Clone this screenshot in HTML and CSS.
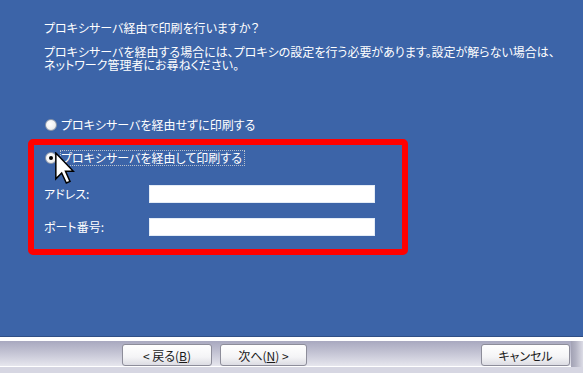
FILE: index.html
```html
<!DOCTYPE html>
<html lang="ja">
<head>
<meta charset="utf-8">
<link rel="stylesheet" href="styles.css">
</head>
<body>
<div class="page">
  <div class="main">
    <p class="title">プロキシサーバ経由で印刷を行いますか？</p>
    <div class="desc">
      <div class="line">プロキシサーバを経由する場合には、プロキシの設定を行う必要があります。設定が解らない場合は、</div>
      <div class="line">ネットワーク管理者にお尋ねください。</div>
    </div>
    <div class="option first">
      <span class="radio"></span>
      <span class="label">プロキシサーバを経由せずに印刷する</span>
    </div>
    <div class="highlight">
      <div class="option">
        <span class="radio checked"></span>
        <span class="label focus">プロキシサーバを経由して印刷する</span>
      </div>
      <div class="field">
        <span class="flabel">アドレス:</span>
        <span class="input"></span>
      </div>
      <div class="field">
        <span class="flabel">ポート番号:</span>
        <span class="input"></span>
      </div>
      <svg class="cursor" width="20" height="32" viewBox="0 0 12 19">
        <path d="M0.5,0.5 L0.5,16 L4,12.5 L6.8,18.5 L9,17.5 L6.3,11.5 L11,11.5 Z" fill="#fff" stroke="#000" stroke-width="0.9" stroke-linejoin="miter"/>
      </svg>
    </div>
  </div>
  <div class="footer">
    <div class="bar">
      <div class="btn back">&lt; 戻る(<u>B</u>)</div>
      <div class="btn next">次へ(<u>N</u>) &gt;</div>
      <div class="spacer"></div>
      <div class="btn cancel">キャンセル</div>
      <div class="edge"></div>
    </div>
    <div class="base"></div>
  </div>
</div>
</body>
</html>
```

FILE: styles.css
```css
* { box-sizing: border-box; }
html, body { margin: 0; padding: 0; }
body {
  width: 583px;
  height: 373px;
  overflow: hidden;
  font-family: "Noto Sans CJK JP", "Noto Sans", sans-serif;
  font-size: 12px;
  font-feature-settings: "palt";
}
.page { display: flex; flex-direction: column; height: 373px; }
.main {
  position: relative;
  height: 336px;
  background: #3c64a8;
  color: #fff;
  padding: 21px 0 0 28px;
}
.title { margin: 0 0 10px 16px; line-height: 14px; }
.desc { margin: 0 0 47px 16px; }
.desc .line { height: 13px; line-height: 13px; white-space: nowrap; }
.option {
  display: flex;
  align-items: center;
  gap: 4px;
  height: 14px;
  padding-left: 17px;
}
.option.first { margin-bottom: 7px; }
.radio {
  width: 12px;
  height: 12px;
  border-radius: 50%;
  border: 1px solid #8c97a8;
  background: radial-gradient(circle at 40% 40%, #ffffff 0%, #f1f1f1 55%, #d2d2d6 100%);
  position: relative;
  flex: none;
}
.radio.checked::after {
  content: "";
  position: absolute;
  left: 3px; top: 3px;
  width: 4px; height: 4px;
  border-radius: 50%;
  background: #000;
}
.label { line-height: 14px; white-space: nowrap; }
.label.focus { outline: 1px dotted #b8c0cc; outline-offset: 0; padding-right: 2px; }
.highlight {
  position: relative;
  width: 380px;
  height: 116px;
  border: 6px solid #ff0000;
  border-radius: 5px;
  padding: 6px 0 0 0;
}
.highlight .option { padding-left: 11px; }
.field {
  display: flex;
  align-items: center;
  padding-left: 10px;
  margin-top: 20px;
  height: 18px;
}
.field + .field { margin-top: 15px; }
.flabel { width: 105px; line-height: 14px; white-space: nowrap; }
.input {
  width: 226px;
  height: 18px;
  background: #fff;
  border: 1px solid #e4ecf6;
}
.cursor {
  position: absolute;
  left: 21px;
  top: 7px;
}
.footer {
  flex: 1;
  display: flex;
  flex-direction: column;
  background: #ffffff;
  border-top: 1px solid #2f4f86;
  padding-top: 4px;
}
.bar {
  display: flex;
  align-items: flex-start;
  height: 26px;
  padding: 3px 0 0 122px;
  background: linear-gradient(#a8a8bf 0%, #c3c3d3 45%, #e6e6ee 100%);
  border-bottom: 1px solid #ffffff;
}
.btn {
  height: 22px;
  border: 1px solid #8d8d9a;
  border-radius: 3px;
  background: linear-gradient(#ffffff 0%, #f4f4f6 60%, #dcdce3 100%);
  color: #1a1a1a;
  display: flex;
  align-items: center;
  justify-content: center;
  white-space: nowrap;
  font-size: 12px;
}
.btn u { text-underline-offset: 1px; }
.back { width: 90px; }
.next { width: 87px; margin-left: 8px; }
.spacer { flex: 1; }
.cancel { width: 89px; }
.edge {
  width: 12px;
  height: 26px;
  margin-top: -3px;
  margin-left: 1px;
  background: linear-gradient(90deg, #a2a2b4 0%, #b4b4c4 40%, #dcdce6 100%);
}
.base { flex: 1; background: #d6d6e2; }
```
